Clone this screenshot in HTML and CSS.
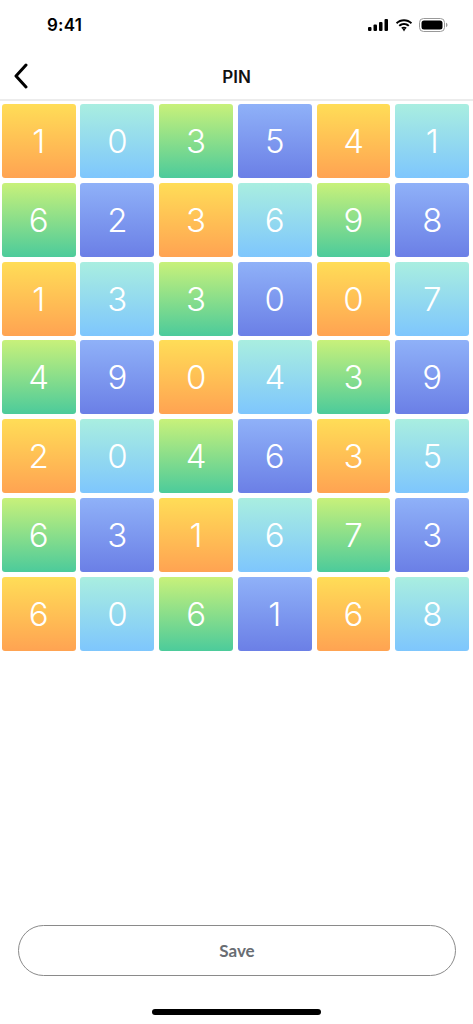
FILE: index.html
```html
<!DOCTYPE html>
<html lang="en">
<head>
    <meta charset="UTF-8">
    <meta name="viewport" content="width=device-width, initial-scale=1.0">
    <title>PIN</title>
    <link rel="stylesheet" href="styles.css">
</head>
<body>
    <div class="screen">
        <div class="status-bar">
            <span class="time">9:41</span>
            <div class="status-icons">
                <svg width="21" height="12" viewBox="0 0 21 12">
                    <rect x="0" y="8" width="3.5" height="4" rx="1" fill="#000"/>
                    <rect x="5.5" y="5.5" width="3.5" height="6.5" rx="1" fill="#000"/>
                    <rect x="11" y="3" width="3.5" height="9" rx="1" fill="#000"/>
                    <rect x="16.5" y="0" width="3.5" height="12" rx="1" fill="#000"/>
                </svg>
                <svg width="18" height="13" viewBox="0 0 18 13">
                    <path d="M9 2.2c2.6 0 5 1 6.8 2.7l1.3-1.3C15 1.5 12.1.3 9 .3S3 1.5.9 3.6l1.3 1.3C4 3.2 6.4 2.2 9 2.2z" fill="#000"/>
                    <path d="M9 5.9c1.6 0 3 .6 4.1 1.6l1.3-1.3C13 4.8 11.1 4 9 4S5 4.8 3.6 6.2l1.3 1.3C6 6.5 7.4 5.9 9 5.9z" fill="#000"/>
                    <path d="M9 9.5c.6 0 1.1.2 1.5.6L9 12.6 7.5 10.1c.4-.4.9-.6 1.5-.6z" fill="#000"/>
                    <path d="M9 7.7c1.1 0 2.1.4 2.8 1.1l-1.3 1.3c-.4-.4-.9-.6-1.5-.6s-1.1.2-1.5.6L6.2 8.8C6.9 8.1 7.9 7.7 9 7.7z" fill="#000"/>
                </svg>
                <svg width="29" height="14" viewBox="0 0 29 14">
                    <rect x="0.5" y="0.5" width="25" height="13" rx="4" fill="none" stroke="#999" stroke-width="1"/>
                    <rect x="2.5" y="2.5" width="21" height="9" rx="2.5" fill="#000"/>
                    <path d="M27 4.8v4.4c.9-.3 1.5-1.2 1.5-2.2s-.6-1.9-1.5-2.2z" fill="#999"/>
                </svg>
            </div>
        </div>

        <div class="nav-bar">
            <svg class="back" width="16" height="26" viewBox="0 0 16 26">
                <path d="M13 2 L3 13 L13 24" fill="none" stroke="#000" stroke-width="3" stroke-linecap="round" stroke-linejoin="round"/>
            </svg>
            <div class="title">PIN</div>
        </div>

        <div class="grid">
            <div class="tile orange">1</div>
            <div class="tile teal">0</div>
            <div class="tile green">3</div>
            <div class="tile blue">5</div>
            <div class="tile orange">4</div>
            <div class="tile teal">1</div>

            <div class="tile green">6</div>
            <div class="tile blue">2</div>
            <div class="tile orange">3</div>
            <div class="tile teal">6</div>
            <div class="tile green">9</div>
            <div class="tile blue">8</div>

            <div class="tile orange">1</div>
            <div class="tile teal">3</div>
            <div class="tile green">3</div>
            <div class="tile blue">0</div>
            <div class="tile orange">0</div>
            <div class="tile teal">7</div>

            <div class="tile green">4</div>
            <div class="tile blue">9</div>
            <div class="tile orange">0</div>
            <div class="tile teal">4</div>
            <div class="tile green">3</div>
            <div class="tile blue">9</div>

            <div class="tile orange">2</div>
            <div class="tile teal">0</div>
            <div class="tile green">4</div>
            <div class="tile blue">6</div>
            <div class="tile orange">3</div>
            <div class="tile teal">5</div>

            <div class="tile green">6</div>
            <div class="tile blue">3</div>
            <div class="tile orange">1</div>
            <div class="tile teal">6</div>
            <div class="tile green">7</div>
            <div class="tile blue">3</div>

            <div class="tile orange">6</div>
            <div class="tile teal">0</div>
            <div class="tile green">6</div>
            <div class="tile blue">1</div>
            <div class="tile orange">6</div>
            <div class="tile teal">8</div>
        </div>

        <div class="spacer"></div>

        <div class="footer">
            <button class="save">Save</button>
            <div class="home-indicator"></div>
        </div>
    </div>
</body>
</html>
```

FILE: styles.css
```css
* {
    box-sizing: border-box;
}

body, html {
    margin: 0;
    padding: 0;
    background: #fff;
}

.screen {
    width: 473px;
    height: 1024px;
    display: flex;
    flex-direction: column;
    font-family: Inter, "Liberation Sans", sans-serif;
}

.status-bar {
    height: 52px;
    display: flex;
    align-items: center;
    justify-content: space-between;
    padding: 0 25px 2px 47px;
}

.time {
    font-size: 17px;
    font-weight: 600;
    color: #000;
    letter-spacing: 0.2px;
}

.status-icons {
    display: flex;
    align-items: center;
    gap: 6px;
}

.nav-bar {
    position: relative;
    height: 49px;
    display: flex;
    align-items: center;
    justify-content: center;
    border-bottom: 2px solid #ececec;
}

.back {
    position: absolute;
    left: 13px;
    top: 11px;
}

.title {
    font-size: 17px;
    font-weight: 600;
    color: #111;
    padding-top: 2px;
}

.grid {
    display: grid;
    grid-template-columns: repeat(6, 1fr);
    gap: 4.8px;
    width: 467.5px;
    margin: 3px 0 0 1.7px;
}

.tile {
    height: 74px;
    border-radius: 3px;
    display: flex;
    align-items: center;
    justify-content: center;
    color: #fff;
    font-family: Inter, "Liberation Sans", sans-serif;
    font-size: 33px;
    font-weight: 300;
}

.orange {
    background: linear-gradient(to bottom, #ffdd57, #ffa352);
}

.teal {
    background: linear-gradient(to bottom, #a9eee0, #7ec6fd);
}

.green {
    background: linear-gradient(to bottom, #c8f17a, #4ccb9b);
}

.blue {
    background: linear-gradient(to bottom, #8fb1f8, #6b7fe6);
}

.spacer {
    flex: 1;
}

.footer {
    display: flex;
    flex-direction: column;
    align-items: center;
    padding-bottom: 9px;
}

.save {
    width: 438px;
    height: 51px;
    border: 1px solid #8a8a8a;
    border-radius: 26px;
    background: #fff;
    font-family: Lato, "Liberation Sans", sans-serif;
    font-weight: 700;
    font-size: 17px;
    color: #696d73;
    margin-left: 1px;
}

.home-indicator {
    width: 169px;
    height: 6px;
    border-radius: 3px;
    background: #000;
    margin-top: 33px;
}
```
